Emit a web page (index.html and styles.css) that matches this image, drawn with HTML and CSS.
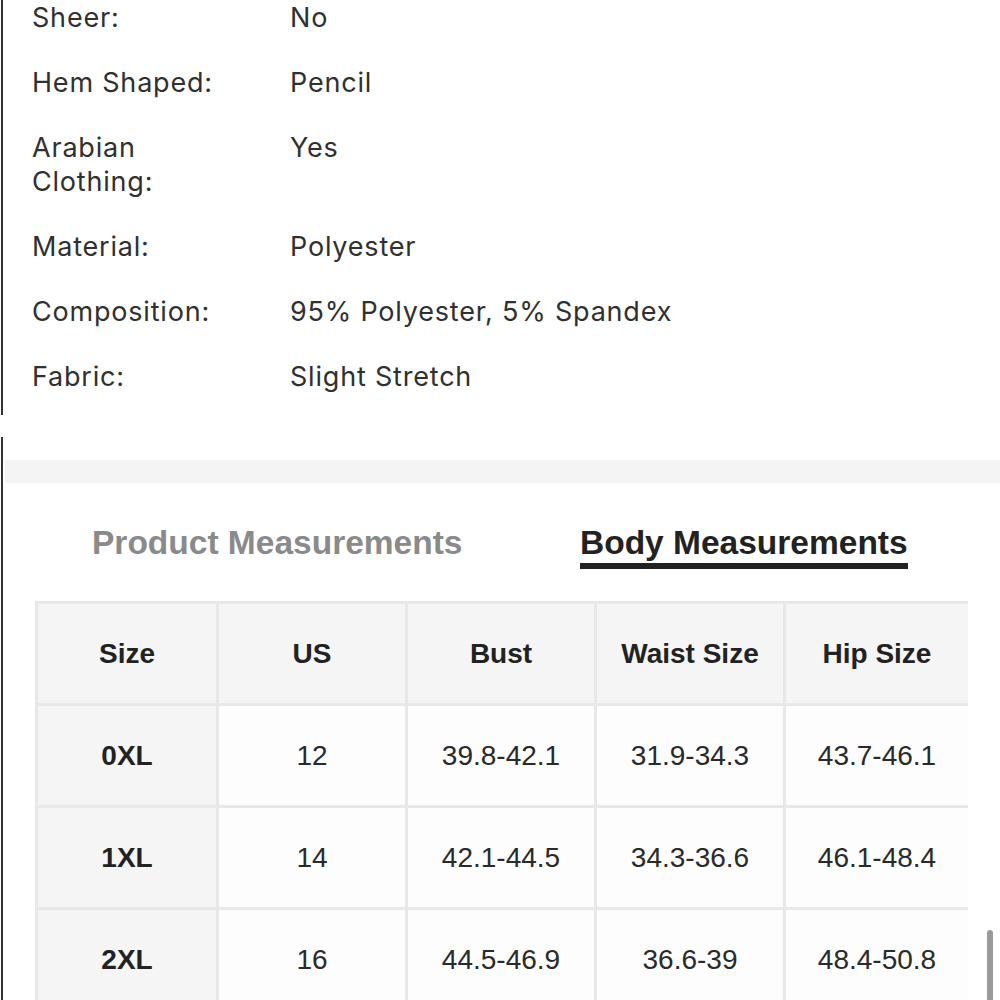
FILE: index.html
```html
<!DOCTYPE html>
<html>
<head>
<meta charset="utf-8">
<link rel="stylesheet" href="styles.css">
</head>
<body>
<section class="specs">
  <div class="spec-row"><div class="label">Sheer:</div><div class="value">No</div></div>
  <div class="spec-row"><div class="label">Hem Shaped:</div><div class="value">Pencil</div></div>
  <div class="spec-row"><div class="label">Arabian Clothing:</div><div class="value">Yes</div></div>
  <div class="spec-row"><div class="label">Material:</div><div class="value">Polyester</div></div>
  <div class="spec-row"><div class="label">Composition:</div><div class="value">95% Polyester, 5% Spandex</div></div>
  <div class="spec-row"><div class="label">Fabric:</div><div class="value">Slight Stretch</div></div>
</section>
<section class="measure">
  <div class="band"></div>
  <div class="tabs">
    <div class="tab">Product Measurements</div>
    <div class="tab active">Body Measurements</div>
  </div>
  <div class="table-wrap">
    <table class="size-table">
      <thead>
        <tr><th>Size</th><th>US</th><th>Bust</th><th>Waist Size</th><th>Hip Size</th></tr>
      </thead>
      <tbody>
        <tr><th>0XL</th><td>12</td><td>39.8-42.1</td><td>31.9-34.3</td><td>43.7-46.1</td></tr>
        <tr><th>1XL</th><td>14</td><td>42.1-44.5</td><td>34.3-36.6</td><td>46.1-48.4</td></tr>
        <tr><th>2XL</th><td>16</td><td>44.5-46.9</td><td>36.6-39</td><td>48.4-50.8</td></tr>
      </tbody>
    </table>
  </div>
  <div class="scroll-thumb"></div>
</section>
</body>
</html>
```
FILE: styles.css
```css
html { overflow: hidden; }
body {
  margin: 0;
  background: #fff;
  font-family: "Liberation Sans", Arial, sans-serif;
  color: #333;
}
.specs {
  border-left: 2px solid #333;
  margin-left: 1px;
  padding: 1px 0 21px 29px;
  display: flex;
  flex-direction: column;
  gap: 31px;
  font-family: Inter, "Liberation Sans", sans-serif;
  font-size: 27px;
  letter-spacing: 0.8px;
  line-height: 34px;
  color: #303030;
}
.spec-row {
  display: grid;
  grid-template-columns: 258px 1fr;
}
.label { width: 205px; }
.measure {
  position: relative;
  margin-top: 22px;
  margin-left: 1px;
  border-left: 2px solid #333;
  padding-top: 23px;
}
.band {
  height: 23px;
  background: #f4f4f4;
  margin-left: 2px;
}
.tabs {
  display: grid;
  grid-template-columns: 488px auto;
  padding: 40px 0 0 89px;
  align-items: start;
}
.tab {
  font-weight: bold;
  font-size: 33.5px;
  line-height: 40px;
  color: #8a8a8a;
  justify-self: start;
}
.tab.active {
  color: #222;
  border-bottom: 6px solid #222;
}
.table-wrap {
  margin: 32px 0 0 32px;
  width: 933px;
  overflow: hidden;
}
.size-table {
  border-collapse: collapse;
  table-layout: fixed;
  width: 936px;
  font-size: 28px;
  color: #2a2a2a;
}
.size-table th, .size-table td {
  border: 3px solid #e8e8e8;
  height: 99px;
  text-align: center;
  vertical-align: middle;
  padding: 0;
}
.size-table th { font-weight: bold; color: #222; }
.size-table thead th { background: #f5f5f5; }
.size-table tbody th { background: #f5f5f5; }
.size-table td { background: #fdfdfd; }
.size-table th:nth-child(1) { width: 178px; }
.size-table th:nth-child(2),
.size-table th:nth-child(3),
.size-table th:nth-child(4) { width: 186px; }
.scroll-thumb {
  position: absolute;
  left: 984px;
  top: 493px;
  width: 6px;
  height: 90px;
  border-radius: 3px;
  background: #9a9a9a;
}
```
